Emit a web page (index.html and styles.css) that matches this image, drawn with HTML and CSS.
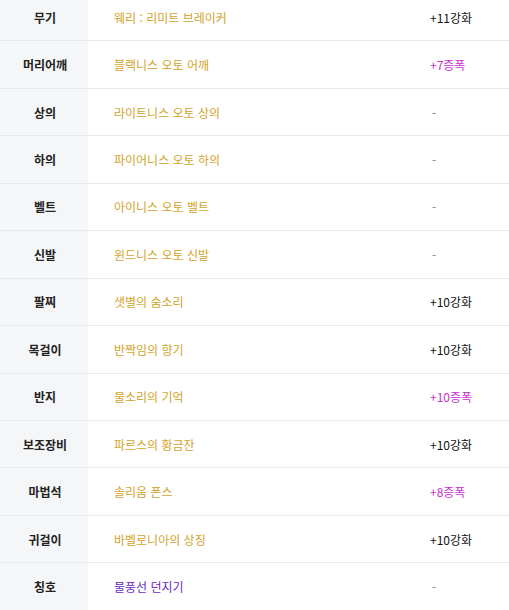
FILE: index.html
```html
<!DOCTYPE html>
<html lang="ko">
<head>
<meta charset="utf-8">
<link rel="stylesheet" href="styles.css">
</head>
<body>
<div class="table">
  <div class="row"><div class="slot">무기</div><div class="item">웨리 : 리미트 브레이커</div><div class="val">+11강화</div></div>
  <div class="row"><div class="slot">머리어깨</div><div class="item">블랙니스 오토 어깨</div><div class="val amp">+7증폭</div></div>
  <div class="row"><div class="slot">상의</div><div class="item">라이트니스 오토 상의</div><div class="val dash">-</div></div>
  <div class="row"><div class="slot">하의</div><div class="item">파이어니스 오토 하의</div><div class="val dash">-</div></div>
  <div class="row"><div class="slot">벨트</div><div class="item">아이니스 오토 벨트</div><div class="val dash">-</div></div>
  <div class="row"><div class="slot">신발</div><div class="item">윈드니스 오토 신발</div><div class="val dash">-</div></div>
  <div class="row"><div class="slot">팔찌</div><div class="item">샛별의 숨소리</div><div class="val">+10강화</div></div>
  <div class="row"><div class="slot">목걸이</div><div class="item">반짝임의 향기</div><div class="val">+10강화</div></div>
  <div class="row"><div class="slot">반지</div><div class="item">물소리의 기억</div><div class="val amp">+10증폭</div></div>
  <div class="row"><div class="slot">보조장비</div><div class="item">파르스의 황금잔</div><div class="val">+10강화</div></div>
  <div class="row"><div class="slot">마법석</div><div class="item">솔리움 폰스</div><div class="val amp">+8증폭</div></div>
  <div class="row"><div class="slot">귀걸이</div><div class="item">바벨로니아의 상징</div><div class="val">+10강화</div></div>
  <div class="row"><div class="slot">칭호</div><div class="item title">물풍선 던지기</div><div class="val dash">-</div></div>
</div>
</body>
</html>
```

FILE: styles.css
```css
html, body {
  margin: 0;
  padding: 0;
  background: #ffffff;
  overflow: hidden;
}
body {
  font-family: "Noto Sans CJK KR", "Noto Sans", sans-serif;
  font-size: 12px;
  color: #222222;
}
.table {
  margin-top: -6px;
  display: flex;
  flex-direction: column;
}
.row {
  display: grid;
  grid-template-columns: 88px 1fr 105px;
  height: 47.45px;
  box-sizing: border-box;
  border-bottom: 1px solid #e6e8ea;
}
.slot, .item, .val {
  display: flex;
  align-items: center;
}
.slot {
  background: #f5f6f7;
  justify-content: center;
  font-weight: 700;
  color: #222222;
  padding-left: 2px;
}
.item {
  padding-left: 26px;
  color: #d2a32a;
}
.item.title {
  color: #6a2bbd;
}
.val {
  padding-left: 26px;
  color: #111111;
}
.val.amp {
  color: #c830d2;
}
.val.dash {
  color: #888888;
  padding-left: 28px;
}
```
